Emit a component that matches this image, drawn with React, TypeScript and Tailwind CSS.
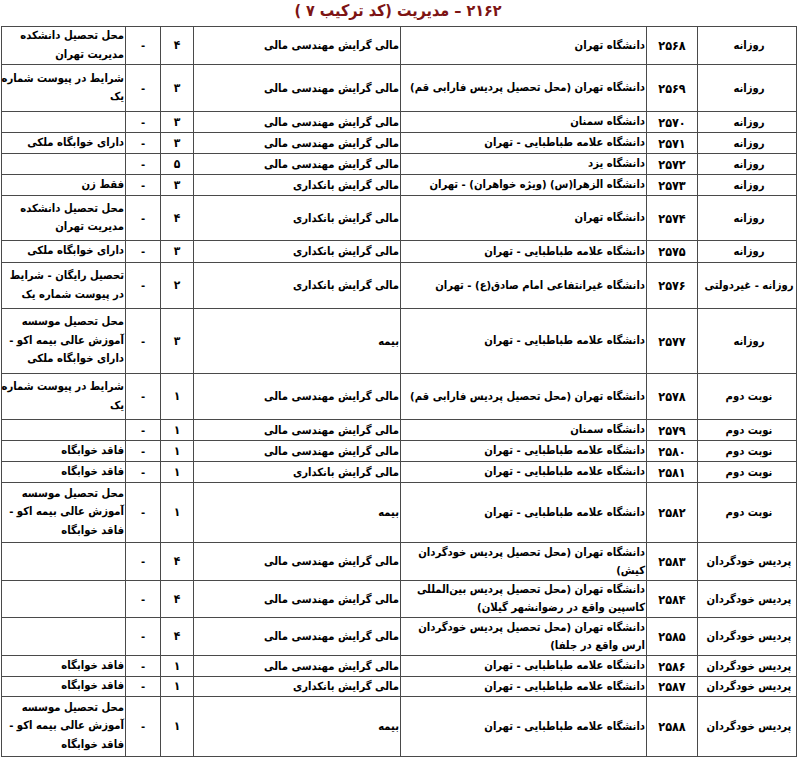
const ALLAMEH = 'دانشگاه علامه طباطبایی - تهران';
const FIN = 'مالی گرایش مهندسی مالی';
const BANK = 'مالی گرایش بانکداری';

type Row = {
  type: string;
  code: string;
  uni: string[];
  major: string;
  cap: string;
  notes: string[];
  h: string;
};

const rows: Row[] = [
  { type: 'روزانه', code: '۲۵۶۸', uni: ['دانشگاه تهران'], major: FIN, cap: '۴', notes: ['محل تحصیل دانشکده', 'مدیریت تهران'], h: 'h-[38px]' },
  { type: 'روزانه', code: '۲۵۶۹', uni: ['دانشگاه تهران (محل تحصیل پردیس فارابی قم)'], major: FIN, cap: '۳', notes: ['شرایط در پیوست شماره', 'یک'], h: 'h-[47px]' },
  { type: 'روزانه', code: '۲۵۷۰', uni: ['دانشگاه سمنان'], major: FIN, cap: '۳', notes: [], h: 'h-[21px]' },
  { type: 'روزانه', code: '۲۵۷۱', uni: [ALLAMEH], major: FIN, cap: '۳', notes: ['دارای خوابگاه ملکی'], h: 'h-[21px]' },
  { type: 'روزانه', code: '۲۵۷۲', uni: ['دانشگاه یزد'], major: FIN, cap: '۵', notes: [], h: 'h-[21px]' },
  { type: 'روزانه', code: '۲۵۷۳', uni: ['دانشگاه الزهرا(س) (ویژه خواهران) - تهران'], major: BANK, cap: '۳', notes: ['فقط زن'], h: 'h-[21px]' },
  { type: 'روزانه', code: '۲۵۷۴', uni: ['دانشگاه تهران'], major: BANK, cap: '۴', notes: ['محل تحصیل دانشکده', 'مدیریت تهران'], h: 'h-[45px]' },
  { type: 'روزانه', code: '۲۵۷۵', uni: [ALLAMEH], major: BANK, cap: '۳', notes: ['دارای خوابگاه ملکی'], h: 'h-[22px]' },
  { type: 'روزانه - غیردولتی', code: '۲۵۷۶', uni: ['دانشگاه غیرانتفاعی امام صادق(ع) - تهران'], major: BANK, cap: '۲', notes: ['تحصیل رایگان - شرایط', 'در پیوست شماره یک'], h: 'h-[46px]' },
  { type: 'روزانه', code: '۲۵۷۷', uni: [ALLAMEH], major: 'بیمه', cap: '۳', notes: ['محل تحصیل موسسه', 'آموزش عالی بیمه اکو -', 'دارای خوابگاه ملکی'], h: 'h-[65px]' },
  { type: 'نوبت دوم', code: '۲۵۷۸', uni: ['دانشگاه تهران (محل تحصیل پردیس فارابی قم)'], major: FIN, cap: '۱', notes: ['شرایط در پیوست شماره', 'یک'], h: 'h-[46px]' },
  { type: 'نوبت دوم', code: '۲۵۷۹', uni: ['دانشگاه سمنان'], major: FIN, cap: '۱', notes: [], h: 'h-[21px]' },
  { type: 'نوبت دوم', code: '۲۵۸۰', uni: [ALLAMEH], major: FIN, cap: '۱', notes: ['فاقد خوابگاه'], h: 'h-[21px]' },
  { type: 'نوبت دوم', code: '۲۵۸۱', uni: [ALLAMEH], major: BANK, cap: '۱', notes: ['فاقد خوابگاه'], h: 'h-[21px]' },
  { type: 'نوبت دوم', code: '۲۵۸۲', uni: [ALLAMEH], major: 'بیمه', cap: '۱', notes: ['محل تحصیل موسسه', 'آموزش عالی بیمه اکو -', 'فاقد خوابگاه'], h: 'h-[60px]' },
  { type: 'پردیس خودگردان', code: '۲۵۸۳', uni: ['دانشگاه تهران (محل تحصیل پردیس خودگردان', 'کیش)'], major: FIN, cap: '۴', notes: [], h: 'h-[38px]' },
  { type: 'پردیس خودگردان', code: '۲۵۸۴', uni: ['دانشگاه تهران (محل تحصیل پردیس بین‌المللی', 'کاسپین واقع در رضوانشهر گیلان)'], major: FIN, cap: '۴', notes: [], h: 'h-[37px]' },
  { type: 'پردیس خودگردان', code: '۲۵۸۵', uni: ['دانشگاه تهران (محل تحصیل پردیس خودگردان', 'ارس واقع در جلفا)'], major: FIN, cap: '۴', notes: [], h: 'h-[38px]' },
  { type: 'پردیس خودگردان', code: '۲۵۸۶', uni: [ALLAMEH], major: FIN, cap: '۱', notes: ['فاقد خوابگاه'], h: 'h-[21px]' },
  { type: 'پردیس خودگردان', code: '۲۵۸۷', uni: [ALLAMEH], major: BANK, cap: '۱', notes: ['فاقد خوابگاه'], h: 'h-[20px]' },
  { type: 'پردیس خودگردان', code: '۲۵۸۸', uni: [ALLAMEH], major: 'بیمه', cap: '۱', notes: ['محل تحصیل موسسه', 'آموزش عالی بیمه اکو -', 'فاقد خوابگاه'], h: 'h-[60px]' },
];

const cell = 'border border-[#4a4a4a] align-middle p-0';

export default function App() {
  return (
    <div
      dir="rtl"
      className="w-[798px] h-[761px] overflow-hidden bg-white text-black font-bold"
      style={{ fontFamily: '"DejaVu Sans Condensed", "DejaVu Sans", Tahoma, sans-serif' }}
    >
      <h1 className="h-[26px] text-center text-[16px] leading-[22px] text-[#7d1414] pr-[2px]">
        ۲۱۶۲ – مدیریت (کد ترکیب ۷ )
      </h1>

      <div className="pr-[1px] pl-[2px]">
        <table className="w-[795px] table-fixed border-collapse text-[11.2px] leading-[17px]">
          <colgroup>
            <col className="w-[99px]" />
            <col className="w-[51px]" />
            <col className="w-[246px]" />
            <col className="w-[207px]" />
            <col className="w-[33px]" />
            <col className="w-[35px]" />
            <col className="w-[124px]" />
          </colgroup>
          <tbody>
            {rows.map((r) => (
              <tr key={r.code} className={r.h}>
                <td className={`${cell} text-center whitespace-nowrap pl-[4px]`}>{r.type}</td>
                <td className={`${cell} text-center text-[12.5px]`}>{r.code}</td>
                <td className={`${cell} text-right pr-[1px] leading-[18px]`}>
                  {r.uni.map((l) => (
                    <div key={l} className="whitespace-nowrap">{l}</div>
                  ))}
                </td>
                <td className={`${cell} text-right pr-[1px] whitespace-nowrap`}>{r.major}</td>
                <td className={`${cell} text-center text-[12px]`}>{r.cap}</td>
                <td className={`${cell} text-center`}>-</td>
                <td className={`${cell} text-right pr-[1px] leading-[18.5px]`}>
                  {r.notes.map((l) => (
                    <div key={l} className="whitespace-nowrap">{l}</div>
                  ))}
                </td>
              </tr>
            ))}
          </tbody>
        </table>
      </div>
    </div>
  );
}
